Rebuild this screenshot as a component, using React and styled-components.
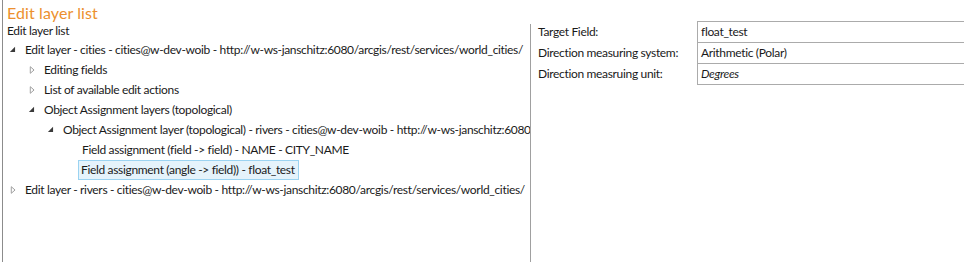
import React from 'react'
import styled, { createGlobalStyle } from 'styled-components'

const GlobalStyle = createGlobalStyle`
	html, body {
		margin: 0;
		padding: 0;
		background: #ffffff;
	}
	body {
		font-family: Lato, "Liberation Sans", sans-serif;
		font-size: 12px;
		letter-spacing: -0.33px;
		color: #1a1a1a;
	}
`

const tree = [
	{ level: 0, state: 'open', text: 'Edit layer - cities - cities@w-dev-woib - http://w-ws-janschitz:6080/arcgis/rest/services/world_cities/' },
	{ level: 1, state: 'closed', text: 'Editing fields' },
	{ level: 1, state: 'closed', text: 'List of available edit actions' },
	{ level: 1, state: 'open', text: 'Object Assignment layers (topological)' },
	{ level: 2, state: 'open', text: 'Object Assignment layer (topological) - rivers - cities@w-dev-woib - http://w-ws-janschitz:6080/arcgis/rest/services/world_cities/' },
	{ level: 3, state: 'leaf', text: 'Field assignment (field -> field) - NAME - CITY_NAME' },
	{ level: 3, state: 'leaf', text: 'Field assignment (angle -> field)) - float_test', selected: true },
	{ level: 0, state: 'closed', text: 'Edit layer - rivers - cities@w-dev-woib - http://w-ws-janschitz:6080/arcgis/rest/services/world_cities/' },
]

const properties = [
	{ label: 'Target Field:', value: 'float_test' },
	{ label: 'Direction measuring system:', value: 'Arithmetic (Polar)' },
	{ label: 'Direction measruing unit:', value: 'Degrees', italic: true },
]

const Arrow = ({ state }) => {
	if (state === 'leaf') return <ArrowBox />
	return (
		<ArrowBox>
			<svg width="17" height="20" viewBox="0 0 17 20">
				{state === 'open'
					? <polygon points="7.5,6.5 7.5,12 2,12" fill="#3a3a3a" />
					: <polygon points="3.5,6.5 7.5,10 3.5,13.5" fill="#ffffff" stroke="#9a9a9a" strokeWidth="1" />}
			</svg>
		</ArrowBox>
	)
}

export default function App() {
	return (
		<>
			<GlobalStyle />
			<Frame>
				<Title>Edit layer list</Title>
				<Main>
					<LeftPanel>
						<Caption>Edit layer list</Caption>
						<Tree>
							{tree.map((node, i) => (
								<Row key={i} $level={node.level}>
									<Arrow state={node.state} />
									<Label $selected={node.selected}>{node.text}</Label>
								</Row>
							))}
						</Tree>
					</LeftPanel>
					<RightPanel>
						<PropGrid>
							{properties.map((p, i) => (
								<React.Fragment key={i}>
									<PropLabel>{p.label}</PropLabel>
									<PropValue $italic={p.italic} $last={i === properties.length - 1}>{p.value}</PropValue>
								</React.Fragment>
							))}
						</PropGrid>
					</RightPanel>
				</Main>
			</Frame>
		</>
	)
}

const Frame = styled.div`
	margin-left: 2px;
	height: 262px;
	border-left: 1px solid #8c8c8c;
	display: flex;
	flex-direction: column;
	overflow: hidden;
`
const Title = styled.div`
	height: 21px;
	padding-left: 4px;
	font-size: 16px;
	line-height: 25px;
	letter-spacing: 0.1px;
	color: #ec902f;
	font-weight: 400;
	white-space: nowrap;
`
const Main = styled.div`
	flex: 1;
	display: flex;
`
const LeftPanel = styled.div`
	width: 527px;
	margin-top: 3px;
	border-right: 1px solid #a0a0a0;
	overflow: hidden;
`
const Caption = styled.div`
	height: 16px;
	padding-left: 4px;
	line-height: 14px;
	white-space: nowrap;
`
const Tree = styled.div`
	display: flex;
	flex-direction: column;
`
const Row = styled.div`
	height: 20px;
	display: flex;
	align-items: center;
	padding-left: ${p => 5 + p.$level * 19}px;
	white-space: nowrap;
`
const ArrowBox = styled.span`
	width: 16px;
	height: 20px;
	flex: none;
	display: flex;
`
const Label = styled.span`
	height: 18px;
	line-height: 18px;
	padding: 0 3px 0 ${p => (p.$selected ? 2 : 0)}px;
	margin-left: ${p => (p.$selected ? -3 : 0)}px;
	border: 1px solid ${p => (p.$selected ? '#9bd3f1' : 'transparent')};
	background: ${p => (p.$selected ? '#e5f3fb' : 'transparent')};
`
const RightPanel = styled.div`
	flex: 1;
`
const PropGrid = styled.div`
	display: grid;
	grid-template-columns: 166px 1fr;
`
const PropLabel = styled.div`
	height: 21px;
	line-height: 21px;
	padding-left: 7px;
	white-space: nowrap;
`
const PropValue = styled.div`
	height: 20px;
	line-height: 20px;
	padding-left: 3px;
	border-top: 1px solid #ababab;
	border-left: 1px solid #ababab;
	border-bottom: ${p => (p.$last ? '1px solid #ababab' : 'none')};
	font-style: ${p => (p.$italic ? 'italic' : 'normal')};
`
